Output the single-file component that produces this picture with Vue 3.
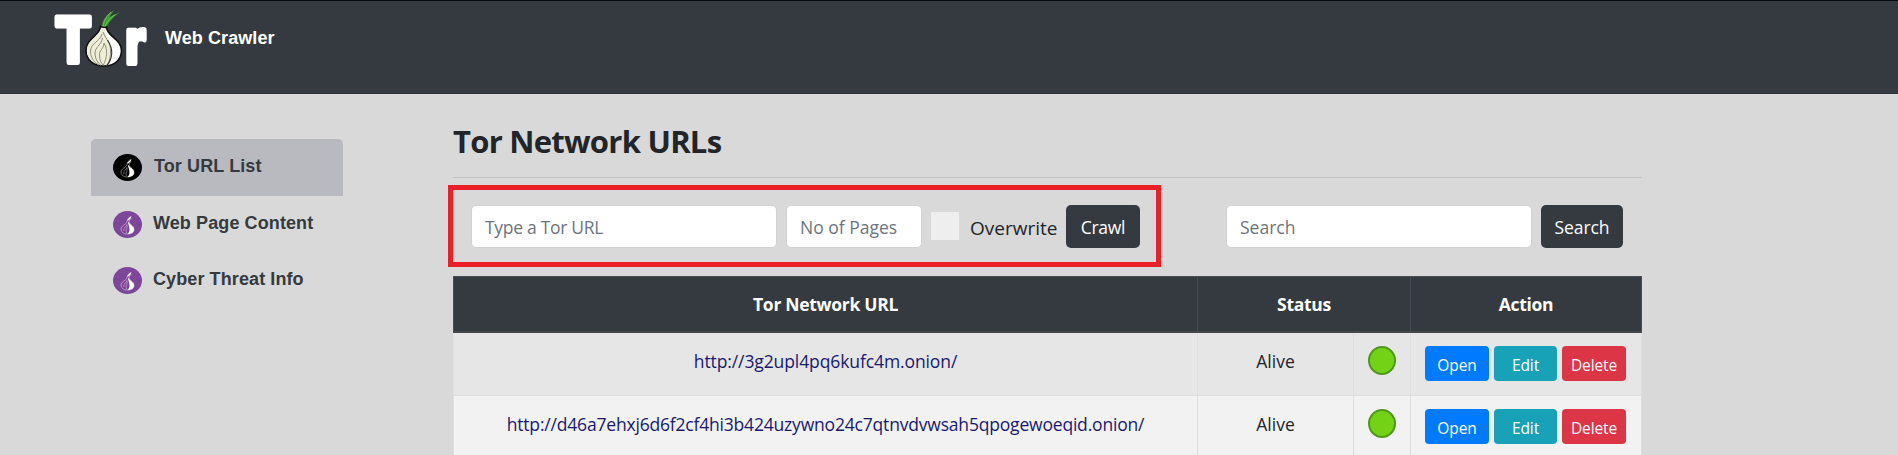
<script setup>
const nav = [
  { label: 'Tor URL List', active: true },
  { label: 'Web Page Content', active: false },
  { label: 'Cyber Threat Info', active: false },
]
const rows = [
  { url: 'http://3g2upl4pq6kufc4m.onion/', cls: 'short' },
  { url: 'http://d46a7ehxj6d6f2cf4hi3b424uzywno24c7qtnvdvwsah5qpogewoeqid.onion/', cls: 'long' },
]
</script>

<template>
  <div class="page">
    <header class="topbar">
      <svg class="logo" viewBox="0 0 110 70" width="110" height="70">
        <g class="word">
          <text transform="translate(11.2 58.4) scale(.79 1)" font-size="63">T</text>
          <text class="r" transform="translate(80 58) scale(.69 1)" font-size="58">r</text>
        </g>
        <path d="M56.500 23C57 16 61 9 69 5.500C67 8 65.500 10 64.500 12L75 7C68 12 64 17 61 23Z" fill="#3f9b35" />
        <path d="M58 22C59 15 62 11 66 7M60 22C62 16 65 13 70 9.500" fill="none" stroke="#6fc24a" stroke-width="1" />
        <path d="M55.5 21.5Q59 23.5 61.5 22C61 31 77 34 76.5 46C76 57 67 61 59 61C49 61 41 55 41 45.500C41 33 55 31 55.500 21.500Z" fill="#fff" stroke="#111" stroke-width="1.6" />
        <path d="M56.500 22.500Q58 23.500 60 23.200C59 31 65 37 65.500 46C65.500 53 64 58 60.500 60C50 61 42 54 42 45.500C42 35 56 32 56.500 22.500Z" fill="#eeeed6" />
        <path d="M58 27C61 35 66 37 65.500 47C65.300 54 64 58 61 60.500M57 29C55 37 45 38 45.500 47C46 54 50 58 54 60M57.500 33C56 41 50 42 50 48C50 54 53 58 56 60.500M59 38C59 44 54 45 54.500 50C54.500 55 56 58 58 60.500M59 38C62 43 62 49 61 53C60 57 59 58 58.500 60" fill="none" stroke="#8d8d7e" stroke-width="1" />
        <path d="M62.500 35C69 45 67 54 62 60.500" fill="none" stroke="#333" stroke-width="1.100" />
      </svg>
      <span class="brand">Web Crawler</span>
    </header>
    <div class="body">
      <nav class="side">
        <a v-for="n in nav" :key="n.label" class="item" :class="{ active: n.active }">
          <svg class="onion" viewBox="0 0 29 27" width="29" height="27">
            <ellipse cx="14.500" cy="13.500" rx="14.500" ry="13.500" :fill="n.active ? '#000' : '#7d4698'" />
            <path d="M14 11C14 8 15.500 6.500 18 5.500L16.500 8L18 7.500C16.500 9 16 10 16.200 11.500C17 14 21 14.500 21 18.500C21 21.500 18 23 14.500 23C10.500 23 8 21 8 18C8 14.500 13 13.500 14 11Z" fill="none" stroke="#fff" stroke-opacity=".6" stroke-width=".7" />
            <path d="M15.500 11C17 14 21 14.500 21 18.500C21 21.500 18 23 14.500 23C18 20 16 15 15 12ZM14.500 10C14.500 8 16 6.500 18.500 5.500L17 8Z" fill="#fff" />
            <path d="M14 13C14 16 10 16 11 20M14 14C15 17 12 18 13.500 22" fill="none" stroke="#fff" stroke-opacity=".45" stroke-width=".8" />
          </svg>
          <span class="label">{{ n.label }}</span>
        </a>
      </nav>
      <main class="main">
        <h1><span>Tor Network URLs</span></h1>
        <div class="tools">
          <div class="crawl">
            <div class="input wide"><span class="t-type">Type a Tor URL</span></div>
            <div class="input pages"><span class="t-pages">No of Pages</span></div>
            <div class="check"></div>
            <span class="over">Overwrite</span>
            <button class="btn b-crawl"><span>Crawl</span></button>
          </div>
          <div class="search">
            <div class="input wide"><span class="t-search">Search</span></div>
            <button class="btn b-search"><span>Search</span></button>
          </div>
        </div>
        <div class="table">
          <div class="tr head">
            <div class="td"><span>Tor Network URL</span></div>
            <div class="td"><span>Status</span></div>
            <div class="td"><span>Action</span></div>
          </div>
          <div v-for="r in rows" :key="r.url" class="tr row">
            <div class="td"><a :class="r.cls">{{ r.url }}</a></div>
            <div class="td"><span>Alive</span></div>
            <div class="td"><i class="dot"></i></div>
            <div class="td acts">
              <button class="sm open"><span>Open</span></button>
              <button class="sm edit"><span>Edit</span></button>
              <button class="sm del"><span>Delete</span></button>
            </div>
          </div>
        </div>
      </main>
    </div>
  </div>
</template>

<style>
body { margin: 0; background: #d9d9d9; overflow: hidden; }
</style>

<style scoped>
* { box-sizing: border-box; }
.page { height: 455px; overflow: hidden; background: #d9d9d9; color: #212529; font: 17.5px/26px "Open Sans", sans-serif; }
.topbar { height: 94px; background: #353a40; border-top: 1px solid #08090f; border-bottom: 1px solid #2e3238; display: flex; align-items: flex-start; padding: 4px 0 0 45px; }
.logo { flex: none; overflow: visible; }
.word { font-family: "DejaVu Sans", sans-serif; font-weight: bold; fill: #fff; stroke: #fff; stroke-width: 5; stroke-linejoin: round; }
.r { stroke-width: 6; }
.brand { margin: 20px 0 0 10px; font: bold 18px/26px "Liberation Sans", Arial, sans-serif; letter-spacing: .08px; color: #fff; white-space: nowrap; }
.body { display: flex; }
.side { width: 252px; margin: 45px 0 0 91px; flex: none; }
.item { display: flex; height: 56px; padding: 15px 0 0 22px; border-radius: 5px 5px 0 0; font: bold 18px/26px "Liberation Sans", Arial, sans-serif; letter-spacing: .1px; color: #343a40; white-space: nowrap; }
.item.active { background: #b9babf; height: 57px; }
.onion { flex: none; }
.label { margin: -1px 0 0 11px; }
.active .label { margin-left: 12px; }
.main { width: 1189px; margin-left: 110px; flex: none; }
h1 { margin: 0; height: 84px; padding-top: 25px; border-bottom: 1px solid #c0c1c2; font: bold 31px/44px "Open Sans", sans-serif; letter-spacing: -.74px; white-space: nowrap; }
.tools { display: flex; height: 98px; padding-top: 7px; }
.crawl { width: 713px; height: 82px; margin-left: -5px; border: 5px solid #ea1f27; display: flex; align-items: center; padding-left: 18px; flex: none; white-space: nowrap; }
.input { height: 43px; border: 1px solid #d0d3d6; border-radius: 5px; background: #fff; color: #6c757d; padding: 8px 13px; flex: none; white-space: nowrap; }
.wide { width: 306px; }
.pages { width: 136px; margin-left: 9px; }
.t-type { letter-spacing: -.3px; }
.check { width: 28px; height: 28px; background: #eee; margin-left: 9px; flex: none; }
.over { width: 96px; margin-left: 11px; font-size: 19px; padding-top: 3px; flex: none; }
.btn { height: 43px; padding: 2px 0 0; border: 0; border-radius: 5px; background: #343a40; color: #fff; font: inherit; flex: none; white-space: nowrap; }
.b-crawl { width: 74px; letter-spacing: -.3px; }
.search { display: flex; align-items: center; height: 82px; margin-left: 65px; }
.b-search { width: 82px; margin-left: 9px; letter-spacing: -.1px; }
.tr { display: grid; text-align: center; white-space: nowrap; }
.head { grid-template-columns: 744px 213px 230px; height: 57px; background: #343a40; color: #fff; font-weight: bold; letter-spacing: -.3px; border: 1px solid #454d55; border-bottom: 2px solid #46494c; }
.row { grid-template-columns: 744px 156px 57px 231px; height: 63px; background: #e6e6e6; border-left: 1px solid #dee2e6; border-bottom: 1px solid #dcdee0; }
.row:nth-child(3) { background: #f2f2f2; }
.td { border-right: 1px solid #dcdee0; padding-top: 15px; }
.head .td { border-color: #454d55; padding-top: 14px; }
.head .td:last-child { border: 0; }
a { color: #191970; }
.short { letter-spacing: -.1px; }
.long { letter-spacing: -.19px; }
.dot { display: block; width: 28px; height: 29px; margin: -2px 0 0 14px; border-radius: 50%; background: #73d216; border: 2px solid #4e9a14; }
.acts { display: flex; padding: 13px 0 0 14px; gap: 5px; }
.sm { width: 64px; height: 35px; border: 0; border-radius: 4px; padding: 2px 0 0; font: 15.500px/24px "Open Sans", sans-serif; color: #fff; letter-spacing: -.1px; }
.open { background: #007bff; }
.edit { background: #17a2b8; width: 63px; }
.del { background: #dc3545; }
</style>
